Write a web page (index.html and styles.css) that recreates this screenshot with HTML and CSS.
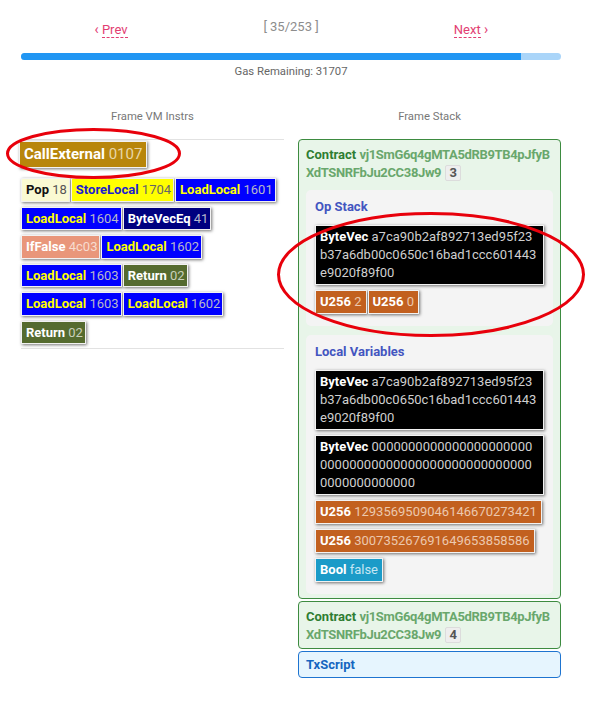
FILE: index.html
```html
<!DOCTYPE html>
<html>
<head>
<meta charset="utf-8">
<link rel="stylesheet" href="styles.css">
</head>
<body>
<div class="page">
  <nav class="pager">
    <div class="pager-cell"><a class="pager-link"><span class="chev">‹</span> <span class="pager-text">Prev</span></a></div>
    <div class="pager-cell counter">[ 35/253 ]</div>
    <div class="pager-cell"><a class="pager-link"><span class="pager-text">Next</span> <span class="chev">›</span></a></div>
  </nav>
  <div class="gasbar"><div class="gasbar-fill" style="width:92.6%"></div></div>
  <div class="gas-label">Gas Remaining: 31707</div>

  <div class="columns">
    <div class="col-title">Frame VM Instrs</div>
    <div class="col-title">Frame Stack</div>

    <div class="instrs">
      <div class="current"><span class="chip c-callext"><b>CallExternal</b> <span class="arg">0107</span></span></div>
      <div class="chip-list">
        <span class="chip c-pop"><b>Pop</b> <span class="arg">18</span></span>
        <span class="chip c-store"><b>StoreLocal</b> <span class="arg">1704</span></span>
        <span class="chip c-load"><b>LoadLocal</b> <span class="arg">1601</span></span>
        <span class="chip c-load"><b>LoadLocal</b> <span class="arg">1604</span></span>
        <span class="chip c-bveq"><b>ByteVecEq</b> <span class="arg">41</span></span>
        <span class="chip c-iffalse"><b>IfFalse</b> <span class="arg">4c03</span></span>
        <span class="chip c-load"><b>LoadLocal</b> <span class="arg">1602</span></span>
        <span class="chip c-load"><b>LoadLocal</b> <span class="arg">1603</span></span>
        <span class="chip c-return"><b>Return</b> <span class="arg">02</span></span>
        <span class="chip c-load"><b>LoadLocal</b> <span class="arg">1603</span></span>
        <span class="chip c-load"><b>LoadLocal</b> <span class="arg">1602</span></span>
        <span class="chip c-return"><b>Return</b> <span class="arg">02</span></span>
      </div>
    </div>

    <div class="stack">
      <div class="frame frame-contract">
        <div class="frame-head"><b class="frame-kind">Contract</b> <span class="addr">vj1SmG6q4gMTA5dRB9TB4pJfyBXdTSNRFbJu2CC38Jw9</span> <span class="count">3</span></div>
        <div class="panel">
          <div class="panel-title">Op Stack</div>
          <div class="val-list">
            <span class="val v-bytes"><b>ByteVec</b> <span class="vtext">a7ca90b2af892713ed95f23b37a6db00c0650c16bad1ccc601443e9020f89f00</span></span>
            <span class="val v-u256"><b>U256</b> <span class="vtext">2</span></span>
            <span class="val v-u256"><b>U256</b> <span class="vtext">0</span></span>
          </div>
        </div>
        <div class="panel">
          <div class="panel-title">Local Variables</div>
          <div class="val-list">
            <span class="val v-bytes"><b>ByteVec</b> <span class="vtext">a7ca90b2af892713ed95f23b37a6db00c0650c16bad1ccc601443e9020f89f00</span></span>
            <span class="val v-bytes"><b>ByteVec</b> <span class="vtext">0000000000000000000000000000000000000000000000000000000000000000</span></span>
            <span class="val v-u256"><b>U256</b> <span class="vtext">1293569509046146670273421</span></span>
            <span class="val v-u256"><b>U256</b> <span class="vtext">300735267691649653858586</span></span>
            <span class="val v-bool"><b>Bool</b> <span class="vtext">false</span></span>
          </div>
        </div>
      </div>
      <div class="frame frame-contract">
        <div class="frame-head"><b class="frame-kind">Contract</b> <span class="addr">vj1SmG6q4gMTA5dRB9TB4pJfyBXdTSNRFbJu2CC38Jw9</span> <span class="count">4</span></div>
      </div>
      <div class="frame frame-tx">
        <div class="frame-head"><b class="frame-kind">TxScript</b></div>
      </div>
    </div>
  </div>
</div>

<svg class="marks" width="614" height="709" viewBox="0 0 614 709">
  <ellipse cx="93.5" cy="153.5" rx="86" ry="24" />
  <ellipse cx="431" cy="274.5" rx="152.5" ry="61" />
</svg>
</body>
</html>
```
FILE: styles.css
```css
html, body {
  margin: 0;
  padding: 0;
  background: #fff;
}
body {
  font-family: Roboto, "Liberation Sans", sans-serif;
  color: #333;
  position: relative;
  width: 614px;
  min-height: 709px;
}
.page {
  width: 540px;
  padding: 0 53px 0 21px;
}
.pager {
  display: grid;
  grid-template-columns: 1fr 1fr 1fr;
  align-items: start;
  padding-top: 18px;
  font-size: 13px;
  line-height: 17px;
}
.pager-cell {
  text-align: center;
  padding-top: 3px;
}
.pager-cell.counter {
  padding-top: 0;
  color: #8d8d8d;
}
.pager-link {
  color: #e23e72;
}
.pager-text {
  border-bottom: 1px dashed #e23e72;
}
.chev {
  font-size: 14px;
}
.gasbar {
  margin-top: 15px;
  height: 7px;
  border-radius: 4px;
  background: #aad5f9;
  overflow: hidden;
}
.gasbar-fill {
  height: 100%;
  background: #2196f3;
}
.gas-label {
  text-align: center;
  font-size: 11.3px;
  line-height: 14px;
  color: #666;
  margin-top: 5px;
}
.columns {
  display: grid;
  grid-template-columns: 263px 263px;
  column-gap: 14px;
  margin-top: 31px;
}
.col-title {
  text-align: center;
  font-size: 11.3px;
  line-height: 14px;
  color: #777;
  margin-bottom: 15px;
}
.instrs {
  border-top: 1px solid #e2e2e2;
  border-bottom: 1px solid #e2e2e2;
  align-self: start;
  padding: 1px 0 4px;
}
.current {
  margin-left: -2px;
  margin-bottom: 10px;
}
.chip {
  display: inline-block;
  font-size: 13px;
  line-height: 15.5px;
  padding: 3px 2px 3px 4px;
  border: 1px solid #f2f2f2;
  box-shadow: 1px 1px 3px rgba(0,0,0,0.55);
  white-space: nowrap;
}
.chip b { font-weight: 700; }
.chip-list {
  display: flex;
  flex-wrap: wrap;
  row-gap: 5px;
  column-gap: 1px;
}
.c-callext {
  background: #b8860b;
  color: #fff;
  font-size: 15px;
  line-height: 19px;
  padding: 3px 4px;
}
.c-callext .arg { color: #e9d7a8; }
.c-pop { background: #fafad2; color: #111; }
.c-pop .arg { color: #555; }
.c-store { background: #ffff00; color: #1c1ccf; }
.c-store .arg { color: #666; }
.c-load { background: #0000ff; color: #ffff00; }
.c-load .arg { color: #b8b8c8; }
.c-bveq { background: #000080; color: #fff; }
.c-bveq .arg { color: #b8b8cc; }
.c-iffalse { background: #e9967a; color: #fff; }
.c-iffalse .arg { color: #f7dcd0; }
.c-return { background: #556b2f; color: #fff; }
.c-return .arg { color: #c9d0bc; }

.stack {
  display: flex;
  flex-direction: column;
  gap: 2px;
}
.frame {
  border: 1px solid #3d8b40;
  border-radius: 4px;
  background: #e8f5e9;
  padding: 6px 7px 4px;
  font-size: 13px;
  line-height: 18px;
}
.frame-head {
  word-break: break-all;
}
.frame-kind {
  color: #2e7d32;
}
.addr {
  color: #69a76c;
  font-weight: 700;
  letter-spacing: -0.35px;
}
.count {
  display: inline-block;
  background: #eeeeee;
  border: 1px solid #dcdcdc;
  border-radius: 2px;
  color: #555;
  font-weight: 700;
  padding: 0 3px;
  line-height: 14px;
  margin-left: 1px;
}
.frame-tx {
  border-color: #1e74d0;
  background: #e6f5fe;
  padding: 4px 7px 3px;
}
.frame-tx .frame-kind {
  color: #1565c0;
}
.panel {
  background: #f4f4f4;
  border-radius: 5px;
  padding: 8px 9px 12px;
  margin-top: 8px;
}
.panel + .panel {
  margin-top: 9px;
}
.panel-title {
  color: #4355c0;
  font-weight: 700;
  margin-bottom: 9px;
}
.val-list {
  display: flex;
  flex-wrap: wrap;
  row-gap: 5px;
  column-gap: 1px;
}
.val {
  display: block;
  border: 1px solid #f2f2f2;
  box-shadow: 1px 1px 3px rgba(0,0,0,0.55);
  padding: 2px 4px;
  word-break: break-all;
  color: #fff;
}
.v-bytes { background: #000; }
.v-bytes .vtext { color: #cfcfcf; }
.v-u256 { background: #c2601f; }
.v-u256 .vtext { color: #ecc8ae; }
.v-bool { background: #1b9bc8; }
.v-bool .vtext { color: #c4e6f3; }

.marks {
  position: absolute;
  left: 0;
  top: 0;
  pointer-events: none;
}
.marks ellipse {
  fill: none;
  stroke: #e8000b;
  stroke-width: 3;
}
```
